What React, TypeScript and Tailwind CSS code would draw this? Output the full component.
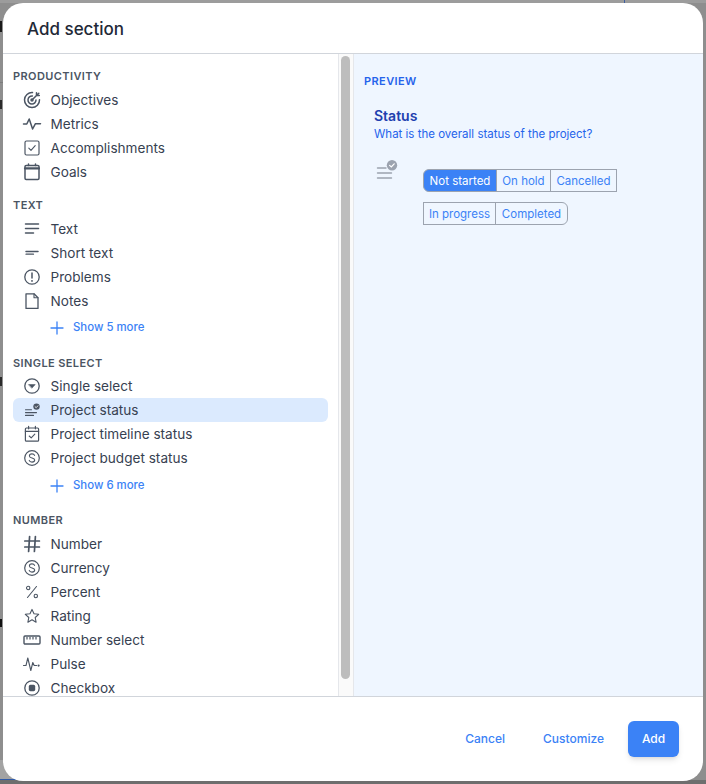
import React from "react";

const S = { fill: "none", stroke: "currentColor", strokeWidth: 1.5, strokeLinecap: "round", strokeLinejoin: "round" } as const;
const Ic = ({ children }: { children: React.ReactNode }) => (
  <svg viewBox="0 0 20 20" className="w-[20px] h-[20px] shrink-0 -mt-px text-[#4b5563]" {...S}>{children}</svg>
);

const icons: Record<string, React.ReactNode> = {
  target: <Ic><path d="M10.5 2.6a7.5 7.5 0 1 0 7 7.2" /><path d="M10.4 6a4 4 0 1 0 3.6 4" /><circle cx="10" cy="10" r="1" /><path d="M10 10l4.5-4.5M14.5 2.8v2.7h2.8M14.5 5.5l2.3-2.3" /></Ic>,
  metrics: <Ic><path d="M1.5 10h3.3l2.4-5 3.4 10 2.7-5.2h5.2" /></Ic>,
  check: <Ic><rect x="3" y="3" width="14" height="14" rx="1.5" strokeWidth="1.2" /><path d="M6.8 10.2l2.2 2.2 4.2-4.8" strokeWidth="1.1" /></Ic>,
  calendar: <Ic><rect x="3" y="3.4" width="14" height="14" rx="1.2" /><path d="M3 6.4h14" strokeWidth="2.2" /><path d="M6.5 2v1.5M13.5 2v1.5" /></Ic>,
  text: <Ic><path d="M3.5 5h13M3.5 9.5h13M3.5 14h8" /></Ic>,
  short: <Ic><path d="M4 8.6h12" /><path d="M4 11.2h7.5" strokeWidth="1.2" /></Ic>,
  problems: <Ic><circle cx="10" cy="10" r="7.2" strokeWidth="1.3" /><path d="M10 6v5" /><path d="M10 13.8v.1" strokeWidth="1.8" /></Ic>,
  file: <Ic><path d="M4 2.8h8l4 4v10.6H4z" strokeWidth="1.3" /><path d="M12 2.8v4h4" strokeWidth="1.1" /></Ic>,
  select: <Ic><circle cx="10" cy="10" r="7.2" strokeWidth="1.3" /><path d="M6.8 8.6h6.4L10 12z" fill="currentColor" strokeWidth="0.6" /></Ic>,
  status: <Ic><path d="M3.5 9.8h6M3.5 12.6h11M3.5 15.4h8" strokeWidth="1.1" /><circle cx="14.5" cy="6.6" r="3.2" fill="currentColor" stroke="none" /><path d="M13.1 6.7l1.1 1 1.7-1.9" stroke="#fff" strokeWidth="0.8" /></Ic>,
  timeline: <Ic><rect x="3.4" y="4" width="13.2" height="13.2" rx="1" strokeWidth="1.2" /><path d="M3.4 7.4h13.2M6.6 2.4v2.4M13.4 2.4v2.4" strokeWidth="1.2" /><path d="M7.2 12l2 1.8 3.6-3.6" strokeWidth="1.1" /></Ic>,
  dollar: <Ic><circle cx="10" cy="10" r="7.3" strokeWidth="1.2" /><path d="M12.6 7.4C12.2 6.3 11.2 5.9 10 5.9c-1.5 0-2.6.8-2.6 2 0 2.8 5.3 1.4 5.3 4.2 0 1.2-1.2 2-2.7 2-1.3 0-2.4-.5-2.8-1.7" strokeWidth="1.1" /></Ic>,
  hash: <Ic><path d="M2.8 7h14.6M2.8 13h14.6M7.6 2.5L6.6 17.5M13.4 2.5l-1 15" strokeWidth="1.7" /></Ic>,
  percent: <Ic><path d="M14.5 4.5L5.5 15.5" strokeWidth="1.1" /><circle cx="6.2" cy="6" r="1.7" strokeWidth="1.1" /><circle cx="13.8" cy="14" r="1.7" strokeWidth="1.1" /></Ic>,
  star: <Ic><path d="M10 3.4l2 4.3 4.7.6-3.5 3.2.9 4.7-4.1-2.4-4.1 2.4.9-4.7-3.5-3.2 4.7-.6z" strokeWidth="1.1" /></Ic>,
  ruler: <Ic><rect x="2" y="6" width="16" height="8" rx="1" strokeWidth="1.4" /><path d="M5 7v2.5M8 7v2.5M11 7v2.5M14 7v2.5" strokeWidth="1.2" strokeLinecap="butt" /></Ic>,
  pulse: <Ic><path d="M1.5 11.5h2.5l1.8-7.5 3 12.5 2-8 1.4 3h2.4" strokeWidth="1.1" /><circle cx="16.6" cy="11.6" r="1.1" fill="currentColor" stroke="none" /></Ic>,
  radio: <Ic><circle cx="10" cy="10" r="7.2" strokeWidth="1.3" /><rect x="6.8" y="6.8" width="6.4" height="6.4" rx="1.6" fill="currentColor" stroke="none" /></Ic>,
};

const Row = ({ icon, label, active }: { icon: string; label: string; active?: boolean }) => (
  <div className={`flex items-center h-6 pl-[9px] gap-[8.5px] rounded-md text-[13.6px] text-[#374151] ${active ? "bg-[#dbeafe]" : ""}`}>
    {icons[icon]}
    <span>{label}</span>
  </div>
);

const More = ({ label }: { label: string }) => (
  <div className="flex items-center h-7 pl-[37px] pt-[2px] gap-[9px] text-[11.4px] font-medium text-[#3b82f6]">
    <svg viewBox="0 0 14 14" className="w-[14px] h-[14px]" fill="none" stroke="currentColor" strokeWidth="1.3" strokeLinecap="round"><path d="M7 1v12M1 7h12" /></svg>
    <span>{label}</span>
  </div>
);

const Heading = ({ children, className }: { children: React.ReactNode; className?: string }) => (
  <div className={`h-4 leading-4 text-[11px] font-semibold tracking-[0.4px] text-[#4b5563] ${className ?? ""}`}>{children}</div>
);

const Seg = ({ children, className }: { children: React.ReactNode; className?: string }) => (
  <div className={`h-full flex items-center justify-center pt-[2px] border border-[#9ca3af] text-[11.5px] -ml-px first:ml-0 ${className ?? ""}`}>{children}</div>
);

export default function App() {
  return (
    <div className="relative w-[706px] h-[784px] overflow-hidden bg-[#8e8e8e] p-[3px] font-['Inter','Liberation_Sans',sans-serif]">
      {/* page dimmed behind the dialog */}
      <div className="absolute left-0 top-0 w-full h-[3px] bg-[#9c9c9c]" />
      <div className="absolute left-[624px] top-0 w-px h-[3px] bg-[#3f5f9f]" />
      <div className="absolute left-0 top-[21px] w-[2px] h-[11px] bg-[#1a1a1a]" />
      <div className="absolute left-0 top-[82px] w-[3px] h-px bg-[#7d7d7d]" />
      <div className="absolute left-0 top-[100px] w-[2px] h-[9px] bg-[#2a2a2a]" />
      <div className="absolute left-0 top-[377px] w-[2px] h-[9px] bg-[#2a2a2a]" />
      <div className="absolute left-0 top-[619px] w-[2px] h-[8px] bg-[#111111]" />
      <div className="absolute left-0 top-[760px] w-[30px] h-[19px] bg-[#a3a3a3]" />
      <div className="absolute left-0 top-[779px] w-[24px] h-px bg-[#2f5aa8]" />
      <div className="absolute left-0 top-[780px] w-full h-[4px] bg-[#6e6e6e]" />

      <div className="relative w-[700px] h-[778px] bg-white rounded-[20px] overflow-hidden flex flex-col">
        <div className="h-[51px] shrink-0 flex items-center pl-6 pt-[3px] border-b border-[#d1d5db] text-[17px] font-medium text-[#1f2937]">
          Add section
        </div>

        <div className="flex-1 min-h-0 flex">
          <div className="w-[335px] shrink-0 overflow-hidden pl-[10px] pr-[10px] pt-[14px]">
            <Heading className="mb-1">PRODUCTIVITY</Heading>
            <Row icon="target" label="Objectives" />
            <Row icon="metrics" label="Metrics" />
            <Row icon="check" label="Accomplishments" />
            <Row icon="calendar" label="Goals" />

            <Heading className="mt-[13px] mb-1">TEXT</Heading>
            <Row icon="text" label="Text" />
            <Row icon="short" label="Short text" />
            <Row icon="problems" label="Problems" />
            <Row icon="file" label="Notes" />
            <More label="Show 5 more" />

            <Heading className="mt-[14px] mb-[3px]">SINGLE SELECT</Heading>
            <Row icon="select" label="Single select" />
            <Row icon="status" label="Project status" active />
            <Row icon="timeline" label="Project timeline status" />
            <Row icon="dollar" label="Project budget status" />
            <div className="mt-px"><More label="Show 6 more" /></div>

            <Heading className="mt-[13px] mb-1">NUMBER</Heading>
            <Row icon="hash" label="Number" />
            <Row icon="dollar" label="Currency" />
            <Row icon="percent" label="Percent" />
            <Row icon="star" label="Rating" />
            <Row icon="ruler" label="Number select" />
            <Row icon="pulse" label="Pulse" />
            <Row icon="radio" label="Checkbox" />
          </div>

          <div className="w-[16px] shrink-0 bg-[#fafafa] border-x border-[#e5e7eb] pt-[2px] pl-[2px]">
            <div className="w-[9px] h-[623px] rounded-full bg-[#bdbdbd]" />
          </div>

          <div className="flex-1 bg-[#eff6ff] pt-[19px] pl-[10px]">
            <div className="h-4 leading-4 text-[11px] font-semibold tracking-[0.4px] text-[#2563eb]">PREVIEW</div>
            <div className="pl-[10px] pt-[18px]">
              <div className="h-[18px] leading-[18px] text-[14px] font-semibold text-[#1e40af]">Status</div>
              <div className="h-[18px] leading-[18px] text-[11.5px] text-[#2563eb]">What is the overall status of the project?</div>
              <div className="flex mt-[15px]">
                <svg viewBox="0 0 22 22" className="w-[22px] h-[22px] ml-[2px] mt-[2px] shrink-0 text-[#9ca3af]" fill="none" stroke="currentColor" strokeLinecap="round">
                  <path d="M1.5 8h8.5M1.5 13h14M1.5 18h14" strokeWidth="1.4" />
                  <circle cx="16" cy="5.2" r="5.2" fill="currentColor" stroke="none" />
                  <path d="M13.6 5.4l1.7 1.6 2.9-3.2" stroke="#fff" strokeWidth="1.2" />
                </svg>
                <div className="ml-[25px] mt-[11px] flex flex-col gap-[10px] text-[#3b82f6]">
                  <div className="flex h-[23px]">
                    <Seg className="w-[74px] bg-[#3b82f6] text-white rounded-l-md">Not started</Seg>
                    <Seg className="w-[55px]">On hold</Seg>
                    <Seg className="w-[67px]">Cancelled</Seg>
                  </div>
                  <div className="flex h-[23px]">
                    <Seg className="w-[73px]">In progress</Seg>
                    <Seg className="w-[73px] rounded-r-md">Completed</Seg>
                  </div>
                </div>
              </div>
            </div>
          </div>
        </div>

        <div className="h-[85px] shrink-0 border-t border-[#d1d5db] flex items-center justify-end pr-6 text-[12px] font-medium text-[#3b82f6]">
          <span className="mr-[38px]">Cancel</span>
          <span className="mr-[24px]">Customize</span>
          <div className="w-[51px] h-[36px] flex items-center justify-center rounded-md bg-[#3b82f6] text-white shadow-md">Add</div>
        </div>
      </div>
    </div>
  );
}
